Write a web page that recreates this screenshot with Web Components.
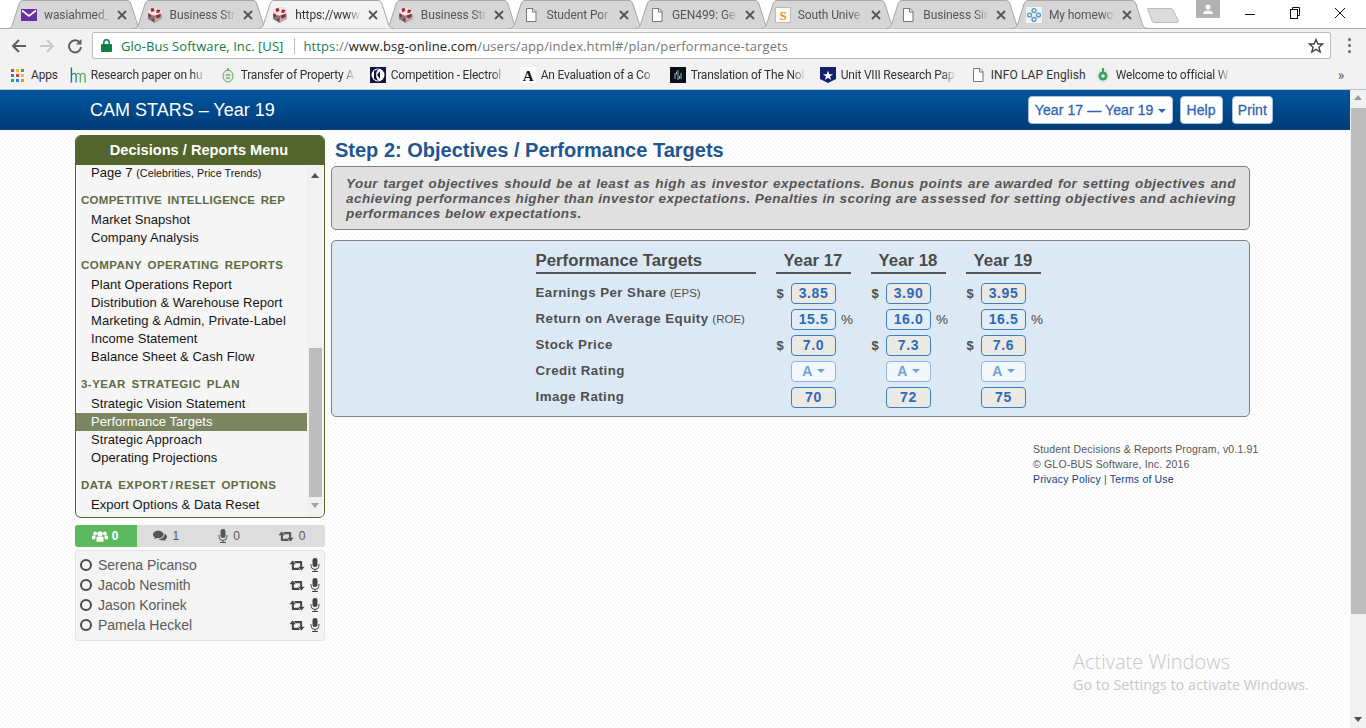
<!DOCTYPE html>
<html>
<head>
<meta charset="utf-8">
<title>Performance Targets</title>
<style>
html, body { margin: 0; height: 728px; overflow: hidden; background: #fff; font-family: "Liberation Sans", Arial, sans-serif; }
</style>
</head>
<body>
<browser-tabs></browser-tabs>
<browser-toolbar></browser-toolbar>
<browser-bookmarks></browser-bookmarks>
<app-shell>
  <app-header title="CAM STARS – Year 19"></app-header>
  <side-menu slot="side">
    <menu-group first>
      <menu-item>Page 7 <small>(Celebrities, Price Trends)</small></menu-item>
    </menu-group>
    <menu-group heading="COMPETITIVE INTELLIGENCE REP" tight>
      <menu-item>Market Snapshot</menu-item>
      <menu-item>Company Analysis</menu-item>
    </menu-group>
    <menu-group heading="COMPANY OPERATING REPORTS">
      <menu-item>Plant Operations Report</menu-item>
      <menu-item>Distribution &amp; Warehouse Report</menu-item>
      <menu-item>Marketing &amp; Admin, Private-Label</menu-item>
      <menu-item>Income Statement</menu-item>
      <menu-item>Balance Sheet &amp; Cash Flow</menu-item>
    </menu-group>
    <menu-group heading="3-YEAR STRATEGIC PLAN">
      <menu-item>Strategic Vision Statement</menu-item>
      <menu-item active>Performance Targets</menu-item>
      <menu-item>Strategic Approach</menu-item>
      <menu-item>Operating Projections</menu-item>
    </menu-group>
    <menu-group heading="DATA EXPORT<span> / </span>RESET OPTIONS">
      <menu-item>Export Options &amp; Data Reset</menu-item>
    </menu-group>
  </side-menu>
  <presence-panel slot="side">
    <presence-row>Serena Picanso</presence-row>
    <presence-row>Jacob Nesmith</presence-row>
    <presence-row>Jason Korinek</presence-row>
    <presence-row>Pamela Heckel</presence-row>
  </presence-panel>
  <targets-page slot="main">
    <target-row values="3.85,3.90,3.95" prefix="$"><b>Earnings Per Share</b> <i>(EPS)</i></target-row>
    <target-row values="15.5,16.0,16.5" suffix="%" kind="soft"><b>Return on Average Equity</b> <i>(ROE)</i></target-row>
    <target-row values="7.0,7.3,7.6" prefix="$"><b>Stock Price</b></target-row>
    <target-row values="A,A,A" kind="select"><b>Credit Rating</b></target-row>
    <target-row values="70,72,75"><b>Image Rating</b></target-row>
  </targets-page>
</app-shell>
<activate-note></activate-note>

<script>
const ICONS = {
  mail: `<svg width="16" height="16" viewBox="0 0 16 16"><rect y="2" width="16" height="12" fill="#6a2fa0"/><path d="M1 3.500 8 9l7-5.500" fill="none" stroke="#fff" stroke-width="1.600"/></svg>`,
  cube: `<svg width="16" height="16" viewBox="0 0 16 16"><path d="M8 0 15 3V12L8 16 1 12V3Z" fill="#b4afaf"/><path d="M8 0 15 3 14.500 8 8 8.500 1.500 8 1 3Z" fill="#eee6e6"/><path d="M1 12 8 16V9L1 7Z" fill="#7f7c7c"/><path d="M3.500 1.800 6.500 1 7.500 3.500 4.500 5.500ZM10 2.500 13.500 3 12 6 9 5.500ZM1.500 6 4 7.500 3.500 10.500 1.500 9.500ZM8.500 8.500 14 6.500 13.500 10 10.500 11.500 9 10.500ZM5 11.500 7 12V14.500L5 13.500Z" fill="#a3262b"/></svg>`,
  doc: `<svg width="16" height="16" viewBox="0 0 16 16"><path d="M3.500 1.500H10L13 4.500V14.500H3.500Z" fill="#fff" stroke="#777"/><path d="M9.500 1.500V5H13" fill="none" stroke="#777"/></svg>`,
  south: `<svg width="16" height="16" viewBox="0 0 16 16" overflow="visible"><rect x=".5" y=".5" width="15" height="15" fill="#fdfaf2" stroke="#bbb"/><text x="8" y="12.500" font-family="Liberation Serif" font-weight="700" font-size="13" fill="#e8892b" text-anchor="middle">S</text></svg>`,
  rings: `<svg width="18" height="18" viewBox="0 0 18 18"><rect width="18" height="18" fill="#eef3f6"/><g fill="none" stroke="#5b93bf" stroke-width="1.500"><circle cx="9" cy="4" r="2.200"/><circle cx="9" cy="14" r="2.200"/><circle cx="4" cy="9" r="2.200"/><circle cx="14" cy="9" r="2.200"/></g></svg>`,
  hm: `<svg width="17" height="16" viewBox="0 0 17 16"><path d="M1.500 0V16" stroke="#1d6f93" stroke-width="1.500"/><path d="M1.500 8Q5 4.500 6.500 8V16" fill="none" stroke="#1d8f8f" stroke-width="1.500"/><path d="M6.500 8Q9.500 4.500 11 8V16M11 8Q14 4.500 16 8V16" fill="none" stroke="#5eb05e" stroke-width="1.500"/></svg>`,
  seal: `<svg width="16" height="16" viewBox="0 0 16 16"><ellipse cx="8" cy="9" rx="5" ry="6" fill="#e6efe2" stroke="#6e9b6b"/><path d="M8 1v3M5.500 8h5M6 11h4" stroke="#4d8a50" stroke-width="1.200"/></svg>`,
  elux: `<svg width="16" height="16" viewBox="0 0 16 16"><rect width="16" height="16" fill="#12123c"/><circle cx="8" cy="8" r="6.500" fill="#fff"/><path d="M9.500 1.500C5 4 5 12 9.500 14.500L4 12V4Z" fill="#12123c"/><path d="M10 4 7 8l3 4Z" fill="#12123c"/></svg>`,
  times: `<svg width="16" height="16" viewBox="0 0 16 16" overflow="visible"><rect width="16" height="16" fill="#fff"/><text x="8" y="13.500" font-family="Liberation Serif" font-weight="700" font-size="15" fill="#111" text-anchor="middle">A</text></svg>`,
  nobel: `<svg width="16" height="16" viewBox="0 0 16 16"><rect width="16" height="16" fill="#0b0e16"/><path d="M8 3v10M5 6v6M11 6v6M6.500 4.500v3M9.500 9v3" stroke="#8fb7c9" stroke-width="1"/></svg>`,
  shield: `<svg width="16" height="16" viewBox="0 0 16 16"><path d="M0 0H16V12L8 16 0 12Z" fill="#13206e"/><path d="M8 3.500 9.300 7.200H13L10 9.400 11.100 13 8 10.800 4.900 13 6 9.400 3 7.200H6.700Z" fill="#fff"/></svg>`,
  emblem: `<svg width="16" height="16" viewBox="0 0 16 16"><ellipse cx="8" cy="8.500" rx="7" ry="7.500" fill="#dfeee3"/><circle cx="8" cy="9" r="4.500" fill="#3f9a63"/><path d="M8 1v4" stroke="#3f9a63" stroke-width="2"/><circle cx="8" cy="9" r="1.800" fill="#e8f2ea"/></svg>`,
  retweet: `<svg width="16" height="11" viewBox="0 0 18 12" fill="currentColor"><path d="M4 .5 7.800 4.500H5.500V8.500H10.500L12.500 11H4Q3.200 11 3.200 10.200V4.500H.5Z"/><path d="M14 11.500 10.200 7.500H12.500V3.500H7.500L5.500 1H14Q14.800 1 14.800 1.800V7.500H17.500Z"/></svg>`,
  mic: `<svg width="10" height="14" viewBox="0 0 10 14" fill="currentColor"><rect x="2.500" y="0" width="5" height="9" rx="2.500"/><path d="M1 6v1.500a4 4 0 0 0 8 0V6" fill="none" stroke="currentColor" stroke-width="1"/><path d="M5 11.500V13M2 13.500H8" stroke="currentColor" stroke-width="1"/></svg>`,
  users: `<svg width="16" height="13" viewBox="0 0 18 14" fill="currentColor"><circle cx="9" cy="4" r="3"/><circle cx="3.500" cy="3.500" r="2.200"/><circle cx="14.500" cy="3.500" r="2.200"/><path d="M5 8.500Q5 7 7 7h4q2 0 2 1.500V13H5Z"/><path d="M0 6.500Q0 6 1.500 6H4Q4.300 7 3.800 8V10H0ZM18 6.500Q18 6 16.500 6H14Q13.700 7 14.200 8V10H18Z"/></svg>`,
  comments: `<svg width="14" height="12" viewBox="0 0 16 13" fill="currentColor"><path d="M6 .5C2.700.5 0 2.400 0 4.800 0 6.200.9 7.400 2.300 8.200L1.500 10.200 4.300 8.900C4.900 9 5.400 9.100 6 9.100 9.300 9.100 12 7.200 12 4.800S9.300.5 6 .5Z"/><path d="M13 3.500C13.100 3.900 13.200 4.300 13.200 4.800 13.200 7.800 10 10 6.500 10.200 7.500 11 9 11.500 10.500 11.500 11 11.500 11.500 11.400 12 11.300L14.500 12.500 13.800 10.600C15.100 9.800 16 8.700 16 7.500 16 5.800 14.800 4.300 13 3.500Z"/></svg>`
};

// base class, sets the shadow markup once
class ShadowEl extends HTMLElement {
  constructor() {
    super();
    this.attachShadow({ mode: 'open' });
  }
  connectedCallback() {
    this.shadowRoot.innerHTML = this.render();
  }
}

class BrowserTabs extends ShadowEl {
  render() {
    const tabs = [
      ['mail', 'wasiahmed_'], ['cube', 'Business Str'], ['cube', 'https://www', true],
      ['cube', 'Business Str'], ['doc', 'Student Por'], ['doc', 'GEN499: Ge'],
      ['south', 'South Unive'], ['doc', 'Business Sim'], ['rings', 'My homewo']
    ];
    const shape = (fill, line) => `<svg class="shape" width="136" height="29" viewBox="0 0 136 29"><path d="M0 28.500C4 28.500 5 26 6 23L12 4C13 1.500 14 .5 16 .5H120C122 .5 123 1.500 124 4L130 23C131 26 132 28.500 136 28.500" fill="${fill}" stroke="${line}"/></svg>`;
    return `
    <style>
    :host { display: flex; height: 29px; padding-left: 7px; box-sizing: border-box; background: #fff; position: relative; font-family: Roboto, sans-serif; font-size: 12px; letter-spacing: -.1px; color: #555; }
    .tab { position: relative; flex: 0 0 136px; margin-right: -10.4px; height: 29px; display: flex; align-items: center; padding-left: 14px; box-sizing: border-box; }
    .tab.on { z-index: 2; color: #333; }
    .shape { position: absolute; left: 0; top: 0; }
    .ic { position: relative; width: 16px; height: 16px; display: flex; align-items: center; justify-content: center; margin-right: 7px; }
    .t { position: relative; width: 66px; white-space: nowrap; -webkit-mask-image: linear-gradient(90deg,#000 80%,transparent); mask-image: linear-gradient(90deg,#000 80%,transparent); }
    .x { position: relative; margin-left: 4px; width: 16px; display: flex; justify-content: center; }
    .line { position: absolute; left: 0; right: 0; bottom: 0; height: 1px; background: #a9a9a9; }
    .new { flex: 0 0 34px; margin: 7px 0 0 10px; height: 17px; }
    .win { margin-left: auto; margin-right: 4px; display: flex; align-items: flex-start; position: relative; }
    .user { width: 24px; height: 18px; background: #b2b2b2; margin-right: 7px; display: flex; justify-content: center; align-items: center; }
    .btn { width: 45px; height: 28px; display: flex; justify-content: center; padding-top: 7px; box-sizing: border-box; }
    </style>
    <div class="line"></div>
    ${tabs.map(t => `<div class="tab ${t[2] ? 'on' : ''}">${shape(t[2] ? '#f2f2f2' : '#d6d6d6', '#a6a6a6')}
      <span class="ic">${ICONS[t[0]]}</span><span class="t">${t[1]}</span>
      <span class="x"><svg width="10" height="10" viewBox="0 0 10 10"><path d="M1 1 9 9M9 1 1 9" stroke="#555" stroke-width="1.800"/></svg></span></div>`).join('')}
    <div class="new"><svg width="34" height="17" viewBox="0 0 34 17"><path d="M1 1.500H24C25 1.500 25.500 2 26 3L31 13C31.500 14.500 31 15.500 30 15.500H7C6 15.500 5.500 15 5 14L1 3C.5 2 .5 1.500 1 1.500Z" fill="#dcdcdc" stroke="#bbb"/></svg></div>
    <div class="win">
      <div class="user"><svg width="10" height="11" viewBox="0 0 10 11" fill="#fff"><circle cx="5" cy="3" r="2.500"/><path d="M0 10Q0 6.500 5 6.500T10 10Z"/></svg></div>
      <div class="btn"><svg width="12" height="12" viewBox="0 0 12 12"><path d="M1 7.500H11" stroke="#111" stroke-width="1"/></svg></div>
      <div class="btn"><svg width="12" height="12" viewBox="0 0 12 12" fill="none" stroke="#111"><path d="M3.500 2.500V.5H10.500V8.500H8.500"/><rect x="1.500" y="2.500" width="7" height="9"/></svg></div>
      <div class="btn"><svg width="12" height="12" viewBox="0 0 12 12"><path d="M1 1 11 11M11 1 1 11" stroke="#111" stroke-width="1"/></svg></div>
    </div>`;
  }
}

class BrowserToolbar extends ShadowEl {
  render() {
    return `
    <style>
    :host { display: flex; align-items: center; height: 33px; background: #f2f2f2; box-sizing: border-box; padding-left: 8px; font-family: "Open Sans", sans-serif; }
    .nav { width: 22px; height: 22px; margin-right: 6px; display: flex; align-items: center; justify-content: center; }
    .box { flex: 1; margin: 0 17px 0 0; height: 27px; background: #fff; border: 1px solid #bdbdbd; border-radius: 2px; box-sizing: border-box; display: flex; align-items: center; padding-left: 8px; font-size: 13px; white-space: nowrap; }
    .sec { color: #0b8043; margin-left: 9px; letter-spacing: .05px; }
    .sep { width: 1px; height: 16px; background: #bbb; margin: 0 8px 0 11px; }
    .url { color: #777; letter-spacing: .13px; }
    .url b { font-weight: 400; color: #222; }
    .url s { text-decoration: none; color: #2a7a62; }
    .star { margin-left: auto; margin-right: 6px; display: flex; }
    .menu { width: 3px; margin-right: 15px; display: flex; flex-direction: column; gap: 3px; }
    .menu i { width: 3px; height: 3px; background: #666; border-radius: 50%; }
    </style>
    <div class="nav"><svg width="16" height="16" viewBox="0 0 16 16"><path d="M15 8H2M8 2 2 8l6 6" fill="none" stroke="#5f5f5f" stroke-width="2"/></svg></div>
    <div class="nav"><svg width="16" height="16" viewBox="0 0 16 16"><path d="M1 8H14M8 2l6 6-6 6" fill="none" stroke="#c8c8c8" stroke-width="2"/></svg></div>
    <div class="nav"><svg width="16" height="16" viewBox="0 0 16 16"><path d="M13 5A6 6 0 1 0 14 9" fill="none" stroke="#5f5f5f" stroke-width="2"/><path d="M14.500 1V6.500H9Z" fill="#5f5f5f"/></svg></div>
    <div class="box">
      <svg width="11" height="13" viewBox="0 0 11 13"><rect y="5" width="11" height="8" rx="1" fill="#0b8043"/><path d="M2.800 5.500V3.500a2.700 2.700 0 0 1 5.400 0V5.500" fill="none" stroke="#0b8043" stroke-width="1.500"/></svg>
      <span class="sec">Glo-Bus Software, Inc. [US]</span><span class="sep"></span>
      <span class="url"><s>https</s>://<b>www.bsg-online.com</b>/users/app/index.html#/plan/performance-targets</span>
      <span class="star"><svg width="16" height="16" viewBox="0 0 16 16"><path d="M8 1.500 9.900 6H14.700L10.900 9.200 12.200 14 8 11.300 3.800 14 5.100 9.200 1.300 6H6.100Z" fill="none" stroke="#444" stroke-width="1.400"/></svg></span>
    </div>
    <div class="menu"><i></i><i></i><i></i></div>`;
  }
}

class BrowserBookmarks extends ShadowEl {
  render() {
    const marks = [
      ['hm', 'Research paper on hu'], ['seal', 'Transfer of Property A'], ['elux', 'Competition - Electrol'],
      ['times', 'An Evaluation of a Co'], ['nobel', 'Translation of The Nol'], ['shield', 'Unit VIII Research Pap']
    ];
    let grid = '';
    ['#e53935','#fbc02d','#43a047','#1e88e5','#e53935','#fbc02d','#43a047','#1e88e5','#fb8c00'].forEach(c => { grid += `<i style="background:${c}"></i>`; });
    const mark = m => `<span class="m"><span class="ic">${ICONS[m[0]]}</span><span class="t">${m[1]}</span></span>`;
    return `
    <style>
    :host { display: flex; align-items: center; height: 28px; padding-bottom: 1px; background: #f2f2f2; border-bottom: 1px solid #b4c4d4; box-sizing: border-box; padding-left: 11px; font-family: Roboto, sans-serif; font-size: 12px; letter-spacing: -.2px; color: #333; white-space: nowrap; }
    .apps { display: grid; grid-template-columns: repeat(3, 3px); gap: 2px; margin-right: 7px; }
    .apps i { width: 3px; height: 3px; }
    .m { display: flex; align-items: center; margin-right: 14px; }
    .ic { width: 16px; height: 16px; margin-right: 5px; display: flex; }
    .t { display: block; width: 115px; -webkit-mask-image: linear-gradient(90deg,#000 88%,transparent); mask-image: linear-gradient(90deg,#000 88%,transparent); }
    .m.short .t { width: 90px; -webkit-mask-image: none; mask-image: none; letter-spacing: .1px; }
    .more { margin-left: auto; margin-right: 22px; font-size: 14px; color: #666; }
    </style>
    <span class="apps">${grid}</span><span style="margin-right:12px">Apps</span>
    ${marks.map(mark).join('')}
    <span class="m short"><span class="ic">${ICONS.doc}</span><span class="t">INFO LAP English</span></span>
    ${mark(['emblem', 'Welcome to official W'])}
    <span class="more">»</span>`;
  }
}

class AppShell extends ShadowEl {
  render() {
    return `
    <style>
    :host { display: flex; height: 638px; }
    .page { flex: 1; display: flex; flex-direction: column; min-width: 0;
      background: #fff repeating-conic-gradient(#f9f9f9 0 25%, #fff 0 50%) 0 0 / 4px 4px; }
    .body { display: flex; gap: 6px; padding: 5px 0 0 75px; }
    .side { width: 250px; display: flex; flex-direction: column; }
    .main { width: 919px; }
    .bar { width: 16px; background: #f1f1f1; display: flex; flex-direction: column; align-items: center; }
    .thumb { width: 15px; height: 506px; background: #bdbdbd; margin-top: 8px; }
    .up { margin-top: 5px; width: 0; border: 4px solid transparent; border-top: 0; border-bottom: 5px solid #9c9c9c; }
    .down { margin-top: auto; margin-bottom: 6px; width: 0; border: 4px solid transparent; border-bottom: 0; border-top: 5px solid #505050; }
    </style>
    <div class="page">
      <slot></slot>
      <div class="body">
        <div class="side"><slot name="side"></slot></div>
        <div class="main"><slot name="main"></slot></div>
      </div>
    </div>
    <div class="bar"><span class="up"></span><div class="thumb"></div><span class="down"></span></div>`;
  }
}

class AppHeader extends ShadowEl {
  render() {
    return `
    <style>
    :host { display: flex; align-items: center; height: 40px; padding-left: 90px; padding-right: 77px; background: linear-gradient(#00569e, #003c78); color: #fff; font-size: 18px; }
    .r { margin-left: auto; display: flex; gap: 7px; }
    .b { height: 28px; box-sizing: border-box; padding: 0 6px; background: #fff; border: 1px solid #a7c0dc; border-radius: 4px; color: #3163b3; font-size: 14px; letter-spacing: .1px; -webkit-text-stroke: .3px #3163b3; display: flex; align-items: center; }
    .caret { width: 0; border: 4px solid transparent; border-bottom: 0; border-top-color: #3163b3; margin-left: 4px; margin-top: 1px; }
    </style>
    <span>${this.getAttribute('title')}</span>
    <div class="r">
      <div class="b">Year 17 — Year 19<span class="caret"></span></div>
      <div class="b">Help</div>
      <div class="b" style="margin-left:2px;padding:0 5px">Print</div>
    </div>`;
  }
}

class SideMenu extends ShadowEl {
  render() {
    return `
    <style>
    :host { display: block; width: 250px; height: 383px; box-sizing: border-box; border: 1.500px solid #55672f; border-radius: 6px; background: #f5f5f5; overflow: hidden; }
    .head { height: 29px; padding: 0 2px 2px 0; box-sizing: border-box; background: #53652c; color: #fff; font-size: 14.600px; font-weight: 700; display: flex; align-items: center; justify-content: center; }
    .wrap { display: flex; height: 352px; }
    .list { width: 231px; overflow: hidden; }
    .in { margin-top: -1px; }
    .track { position: relative; width: 16px; background: #f1f1f1; display: flex; flex-direction: column; align-items: center; }
    .up { margin-top: 8px; width: 0; border: 4px solid transparent; border-top: 0; border-bottom: 5px solid #505050; }
    .thumb { width: 13px; height: 149px; background: #bdbdbd; margin-top: 170px; }
    .down { margin-top: 6px; width: 0; border: 4px solid transparent; border-bottom: 0; border-top: 5px solid #a0a0a0; }
    </style>
    <div class="head">Decisions / Reports Menu</div>
    <div class="wrap">
      <div class="list"><div class="in"><slot></slot></div></div>
      <div class="track"><span class="up"></span><div class="thumb"></div><span class="down"></span></div>
    </div>`;
  }
}

class MenuGroup extends ShadowEl {
  render() {
    const h = this.getAttribute('heading');
    return `
    <style>
    :host { display: block; margin-top: ${this.hasAttribute('first') ? 0 : 10}px; }
    .h { height: 19px; line-height: 17px; padding-left: 5px; font-size: 11.500px; font-weight: 700; color: #5d6b44; letter-spacing: ${this.hasAttribute('tight') ? .28 : .45}px; word-spacing: 2px; white-space: nowrap; }
    .h span { word-spacing: -2px; }
    </style>
    ${h ? `<div class="h">${h}</div>` : ''}
    <slot></slot>`;
  }
}

class MenuItem extends ShadowEl {
  render() {
    const on = this.hasAttribute('active');
    return `
    <style>
    :host { display: block; height: 18px; line-height: 18px; padding-left: 15px; font-size: 13px; letter-spacing: .06px; white-space: nowrap; color: ${on ? '#fff' : '#161616'}; background: ${on ? '#7b8560' : 'transparent'}; }
    ::slotted(small) { font-size: 10.700px; }
    </style>
    <slot></slot>`;
  }
}

class PresencePanel extends ShadowEl {
  render() {
    const tab = (ic, n, on) => `<div class="t ${on ? 'on' : ''}">${ICONS[ic]}<span>${n}</span></div>`;
    return `
    <style>
    :host { display: block; margin-top: 7px; font-size: 14px; }
    .tabs { display: flex; height: 22px; background: #ddd; border-radius: 3px; overflow: hidden; color: #555; font-size: 12px; }
    .t { flex: 1; display: flex; align-items: center; justify-content: center; gap: 5px; padding-right: 4px; box-sizing: border-box; }
    .t.on { flex: 0 0 62px; background: #5cb85c; color: #fff; font-weight: 700; padding-right: 2px; gap: 4px; }
    .box { margin-top: 3px; height: 91px; box-sizing: border-box; padding: 4px 4px 0 4px; background: #f4f4f4; border: 1px solid #e2e2e2; border-radius: 3px; }
    </style>
    <div class="tabs">
      ${tab('users', 0, true)}${tab('comments', 1)}${tab('mic', 0)}${tab('retweet', 0)}
    </div>
    <div class="box"><slot></slot></div>`;
  }
}

class PresenceRow extends ShadowEl {
  render() {
    return `
    <style>
    :host { display: flex; align-items: center; height: 20px; color: #5a5a5a; font-size: 14px; }
    .dot { width: 8px; height: 8px; border: 2px solid #4a4a4a; border-radius: 50%; margin-right: 6px; }
    .r { margin-left: auto; display: flex; align-items: center; gap: 5px; color: #444; }
    .r svg { display: block; }
    </style>
    <span class="dot"></span><slot></slot>
    <span class="r">${ICONS.retweet}${ICONS.mic}</span>`;
  }
}

class TargetsPage extends ShadowEl {
  render() {
    const yr = y => `<div class="y">Year ${y}</div>`;
    return `
    <style>
    :host { display: block; }
    h1 { margin: 0; height: 31px; line-height: 30px; padding-left: 4px; font-size: 20px; font-weight: 700; color: #1f5590; }
    .note { height: 64px; box-sizing: border-box; padding: 9px 13px 0 14px; background: #e0e0e0; border: 1.500px solid #808080; border-radius: 5px; color: #555; font-size: 13.500px; line-height: 15px; font-weight: 700; font-style: italic; text-align: justify; letter-spacing: .45px; }
    .panel { margin-top: 10px; height: 177px; box-sizing: border-box; padding: 8px 0 0 203.500px; background: #dce9f4; border: 1.500px solid #808080; border-radius: 5px; }
    .hd { display: grid; grid-template-columns: 220px 75px 75px 75px; column-gap: 20px; height: 25px; margin-bottom: 6px; color: #4a4a4a; }
    .hd > div { border-bottom: 2px solid #555; font-weight: 700; line-height: 24px; height: 23px; }
    .n { font-size: 16.800px; }
    .y { font-size: 16.800px; text-align: center; }
    .foot { margin: 25px 0 0 702px; font-size: 10.500px; line-height: 15px; color: #555; letter-spacing: .18px; white-space: nowrap; }
    .foot span { color: #13407e; }
    </style>
    <h1>Step 2: Objectives / Performance Targets</h1>
    <div class="note">Your target objectives should be at least as high as investor expectations. Bonus points are awarded for setting objectives and achieving performances higher than investor expectations. Penalties in scoring are assessed for setting objectives and achieving performances below expectations.</div>
    <div class="panel">
      <div class="hd"><div class="n">Performance Targets</div>${yr(17)}${yr(18)}${yr(19)}</div>
      <slot></slot>
    </div>
    <div class="foot">Student Decisions &amp; Reports Program, v0.1.91<br>© GLO-BUS Software, Inc. 2016<br><span>Privacy Policy</span> | <span>Terms of Use</span></div>`;
  }
}

class TargetRow extends ShadowEl {
  render() {
    const kind = this.getAttribute('kind') || '';
    const pre = this.getAttribute('prefix') || '';
    const suf = this.getAttribute('suffix') || '';
    const cell = v => `<div class="c"><span class="p">${pre}</span><span class="v ${kind}">${v}${kind === 'select' ? '<i></i>' : ''}</span><span class="s">${suf}</span></div>`;
    return `
    <style>
    :host { display: grid; grid-template-columns: 221px 75px 75px 75px; column-gap: 20px; height: 26px; align-items: center; color: #4f4f4f; font-size: 13.300px; }
    .l { white-space: nowrap; padding-bottom: 2px; }
    ::slotted(b) { letter-spacing: .45px; }
    ::slotted(i) { font-style: normal; font-size: 11.500px; }
    .c { display: flex; align-items: center; position: relative; }
    .p { flex: none; width: 14.500px; font-size: 13px; font-weight: 700; }
    .v { flex: none; width: 45px; height: 21px; box-sizing: border-box; border: 1.500px solid #3b80c2; border-radius: 4px; background: #ebe9e4; color: #2f69ba; font-weight: 700; font-size: 14px; letter-spacing: .6px; display: flex; align-items: center; justify-content: center; }
    .v.soft { background: #e3edf6; }
    .v.select { background: #f2f7fb; border-color: #8fb4da; color: #72a0d8; }
    .v i { width: 0; border: 4px solid transparent; border-bottom: 0; border-top-color: #72a0d8; margin-left: 4px; }
    .s { flex: none; margin-left: 5px; font-size: 13.500px; color: #444; width: 12px; }
    </style>
    <div class="l"><slot></slot></div>
    ${this.getAttribute('values').split(',').map(cell).join('')}`;
  }
}

class ActivateNote extends ShadowEl {
  render() {
    return `
    <style>
    :host { position: absolute; left: 1073px; top: 650px; color: #c8c8c8; font-family: "Open Sans", sans-serif; pointer-events: none; white-space: nowrap; }
    .a { font-size: 20px; font-weight: 300; line-height: 24px; }
    .b { font-size: 14.400px; line-height: 22px; }
    </style>
    <div class="a">Activate Windows</div>
    <div class="b">Go to Settings to activate Windows.</div>`;
  }
}

customElements.define('browser-tabs', BrowserTabs);
customElements.define('browser-toolbar', BrowserToolbar);
customElements.define('browser-bookmarks', BrowserBookmarks);
customElements.define('app-shell', AppShell);
customElements.define('app-header', AppHeader);
customElements.define('side-menu', SideMenu);
customElements.define('menu-group', MenuGroup);
customElements.define('menu-item', MenuItem);
customElements.define('presence-panel', PresencePanel);
customElements.define('presence-row', PresenceRow);
customElements.define('targets-page', TargetsPage);
customElements.define('target-row', TargetRow);
customElements.define('activate-note', ActivateNote);
</script>
</body>
</html>
